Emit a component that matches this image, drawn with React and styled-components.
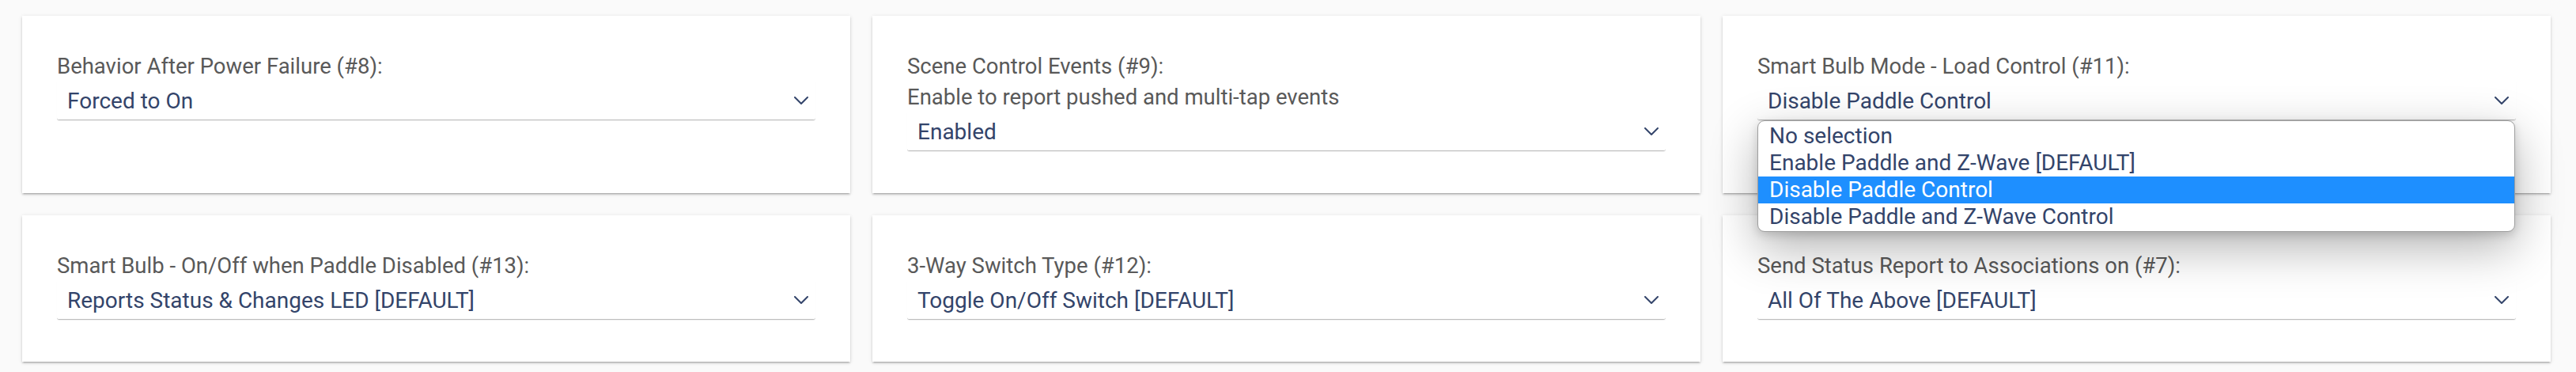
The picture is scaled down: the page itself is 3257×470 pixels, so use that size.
import React from "react";
import styled, { createGlobalStyle } from "styled-components";

const Global = createGlobalStyle`
  html, body { margin: 0; padding: 0; background: #fafafa; }
  body { font-family: Roboto, "Noto Sans", "Liberation Sans", sans-serif; }
  * { box-sizing: border-box; }
`;

const Grid = styled.div`
  display: grid;
  grid-template-columns: repeat(3, 1047px);
  gap: 28px;
  padding: 20px 28px;
`;

const Card = styled.section`
  position: relative;
  background: #fff;
  padding: 44px 44px 53px;
  box-shadow: 0 2px 2px rgba(0, 0, 0, 0.14), 0 3px 1px -2px rgba(0, 0, 0, 0.12),
    0 1px 5px rgba(0, 0, 0, 0.12);
  z-index: ${(p) => (p.$raised ? 2 : 1)};
`;

const Label = styled.div`
  font-size: 27.5px;
  line-height: 39px;
  color: #595959;
`;

const Field = styled.div`
  position: relative;
`;

const SelectBox = styled.div`
  display: flex;
  align-items: center;
  justify-content: space-between;
  height: 49px;
  padding: 0 9px 0 13px;
  border-bottom: 1px solid #bdbdbd;
  border-radius: 0 0 3px 3px;
  box-shadow: 0 1px 1px rgba(0, 0, 0, 0.06);
`;

const Value = styled.span`
  font-size: 28px;
  color: #33446a;
  white-space: nowrap;
`;

const Menu = styled.ul`
  position: absolute;
  left: 0;
  right: 1px;
  top: 49px;
  margin: 0;
  padding: 2px 0 1px;
  list-style: none;
  background: #fff;
  border: 1px solid #9e9e9e;
  border-radius: 9px;
  box-shadow: 0 20px 60px rgba(0, 0, 0, 0.3), 0 4px 12px rgba(0, 0, 0, 0.15);
  overflow: hidden;
  z-index: 5;
`;

const Item = styled.li`
  height: 34px;
  line-height: 34px;
  padding-left: 14px;
  font-size: 28px;
  white-space: nowrap;
  color: ${(p) => (p.$active ? "#ffffff" : "#33446a")};
  background: ${(p) => (p.$active ? "#1e8fff" : "transparent")};
`;

const Chevron = () => (
  <svg width="18" height="11" viewBox="0 0 18 11" fill="none">
    <polyline
      points="1,1 9,9 17,1"
      stroke="#34456b"
      strokeWidth="2"
      strokeLinecap="round"
      strokeLinejoin="round"
    />
  </svg>
);

const cards = [
  { label: "Behavior After Power Failure (#8):", value: "Forced to On" },
  {
    label: "Scene Control Events (#9):",
    desc: "Enable to report pushed and multi-tap events",
    value: "Enabled",
  },
  {
    label: "Smart Bulb Mode - Load Control (#11):",
    value: "Disable Paddle Control",
    options: [
      "No selection",
      "Enable Paddle and Z-Wave [DEFAULT]",
      "Disable Paddle Control",
      "Disable Paddle and Z-Wave Control",
    ],
  },
  {
    label: "Smart Bulb - On/Off when Paddle Disabled (#13):",
    value: "Reports Status & Changes LED [DEFAULT]",
  },
  { label: "3-Way Switch Type (#12):", value: "Toggle On/Off Switch [DEFAULT]" },
  {
    label: "Send Status Report to Associations on (#7):",
    value: "All Of The Above [DEFAULT]",
  },
];

export default function App() {
  return (
    <>
      <Global />
      <Grid>
        {cards.map((c, i) => (
          <Card key={i} $raised={!!c.options}>
            <Label>{c.label}</Label>
            {c.desc && <Label>{c.desc}</Label>}
            <Field>
              <SelectBox>
                <Value>{c.value}</Value>
                <Chevron />
              </SelectBox>
              {c.options && (
                <Menu>
                  {c.options.map((o) => (
                    <Item key={o} $active={o === c.value}>
                      {o}
                    </Item>
                  ))}
                </Menu>
              )}
            </Field>
          </Card>
        ))}
      </Grid>
    </>
  );
}
